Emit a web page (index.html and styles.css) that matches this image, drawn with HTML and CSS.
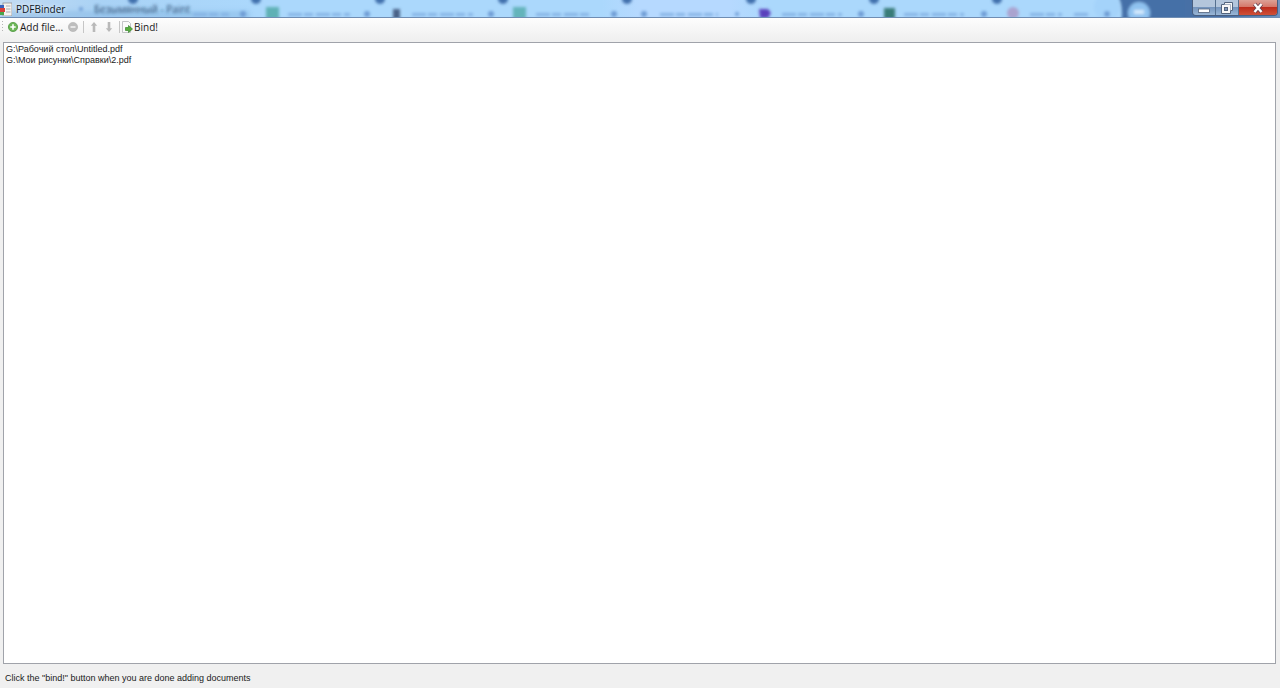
FILE: index.html
```html
<!DOCTYPE html>
<html lang="en">
<head>
  <meta charset="UTF-8" />
  <meta name="viewport" content="width=device-width, initial-scale=1.0"/>
  <title>PDFBinder</title>
  <link rel="stylesheet" href="styles.css">
</head>
<body>

  <header class="titlebar">
    <!-- Blurred windows behind the glass -->
    <svg class="glass" viewBox="0 0 1280 17" preserveAspectRatio="none" aria-hidden="true">
      <defs>
        <filter id="soft" filterUnits="userSpaceOnUse" x="-20" y="-20" width="1320" height="60"><feGaussianBlur stdDeviation="1.7"/></filter>
        <filter id="wide" filterUnits="userSpaceOnUse" x="-20" y="-20" width="1320" height="60"><feGaussianBlur stdDeviation="2.5"/></filter>
        <linearGradient id="sky">
          <stop offset="0" stop-color="#c3dbf2"/>
          <stop offset="0.08" stop-color="#a9d2f5"/>
          <stop offset="0.2" stop-color="#abd8fc"/>
          <stop offset="0.47" stop-color="#abd8fc"/>
          <stop offset="0.5" stop-color="#b6d9ff"/>
          <stop offset="0.57" stop-color="#b6d9ff"/>
          <stop offset="0.6" stop-color="#abd8fc"/>
          <stop offset="1" stop-color="#abd8fc"/>
        </linearGradient>
        <linearGradient id="desk">
          <stop offset="0" stop-color="#4470a8"/>
          <stop offset="0.6" stop-color="#466ea5"/>
          <stop offset="1" stop-color="#7fa3cd"/>
        </linearGradient>
      </defs>
      <rect width="1280" height="17" fill="url(#sky)"/>
      <rect x="0" y="11" width="250" height="8" fill="#83b5e2" opacity="0.5" filter="url(#wide)"/>
      <g filter="url(#soft)">
        <path d="M1117 -6H1300V24H1121Q1124 6 1117 -6Z" fill="url(#desk)"/>
        <circle cx="1107" cy="7" r="13" fill="#a4d3fa"/>
        <circle cx="1139" cy="13" r="11" fill="#8fc2f0"/>
        <rect x="1134" y="10" width="10" height="4" fill="#d5ebfd"/>
        <g fill="#3f6fac">
          <circle cx="133" cy="-1" r="5"/><circle cx="256" cy="-1" r="5"/>
          <circle cx="380" cy="-1" r="5"/><circle cx="503" cy="-1" r="5"/>
          <circle cx="627" cy="-1" r="5"/><circle cx="751" cy="-1" r="5"/>
          <circle cx="874" cy="-1" r="5"/><circle cx="997" cy="-1" r="5"/>
        </g>
        <rect x="266" y="7" width="13" height="12" fill="#5eb1b5"/>
        <rect x="513" y="7" width="13" height="12" fill="#64b4bb"/>
        <rect x="393" y="9" width="7" height="10" fill="#4a6287"/>
        <path d="M759 9H768L771 13L768 18H760Z" fill="#5a3fbc"/>
        <rect x="884" y="8" width="11" height="11" fill="#377b78"/>
        <circle cx="1013" cy="13" r="6" fill="#aaa3cf"/>
        <g fill="#6d9bd4">
          <circle cx="243" cy="14" r="3"/><circle cx="367" cy="14" r="3"/>
          <circle cx="491" cy="14" r="3"/><circle cx="614" cy="14" r="3"/>
          <circle cx="644" cy="14" r="3"/><circle cx="737" cy="14" r="2"/>
          <circle cx="861" cy="14" r="3"/><circle cx="984" cy="14" r="3"/>
          <circle cx="1107" cy="14" r="3"/><circle cx="81" cy="9" r="2"/>
        </g>
        <g stroke="#84b2e4" stroke-width="3" stroke-dasharray="14 2 9 3">
          <path d="M193 14.5H229M288 14.5H350M412 14.5H473M536 14.5H590M660 14.5H718M782 14.5H842M904 14.5H964M1030 14.5H1062M1074 14.5H1088"/>
        </g>
      </g>
      <g class="ghost" filter="url(#soft)">
        <text x="94" y="13">Безымянный - Paint</text>
      </g>
    </svg>

    <div class="caption">
      <svg class="app-icon" viewBox="0 0 12 14" aria-hidden="true">
        <rect x="3" y="1" width="9" height="13" fill="#f5f3f0" stroke="#8f9094" stroke-width="0.8"/>
        <path d="M6 4H10.500M6 7H10.500M6 10H10.500" stroke="#a9abb3"/>
        <path d="M0 3H4V6H0Z" fill="#375fbb"/>
        <path d="M0 6H5V10H0Z" fill="#d8403a"/>
        <path d="M0 10H4V13H0Z" fill="#4aa54b"/>
      </svg>
      <h1 class="title">PDFBinder</h1>
    </div>

    <div class="window-buttons">
      <button type="button" class="win-btn" aria-label="Minimize">
        <svg viewBox="0 0 12 12"><rect x="0.500" y="7" width="11" height="3.500" fill="#fff" stroke="#53647e" stroke-width="0.8"/></svg>
      </button>
      <button type="button" class="win-btn" aria-label="Restore">
        <svg viewBox="0 0 12 12">
          <path d="M3.500 0.500H11.500V8.500H9.500V11.500H0.500V2.500H3.500Z" fill="#f8f8f8" stroke="#53647e"/>
          <path d="M3.500 2.500H9.500V8.500" fill="none" stroke="#8797ac" stroke-width="0.7"/>
          <rect x="3.500" y="5.500" width="3" height="3" fill="#8098b8" stroke="#53647e"/>
        </svg>
      </button>
      <button type="button" class="win-btn close-btn" aria-label="Close">
        <svg viewBox="0 0 12 12">
          <path d="M2.500 2L9.500 10M9.500 2L2.500 10" stroke="#674552" stroke-width="4"/>
          <path d="M2.500 2L9.500 10M9.500 2L2.500 10" stroke="#fff" stroke-width="2.400"/>
        </svg>
      </button>
    </div>
  </header>

  <div class="toolbar" role="toolbar" aria-label="Documents">
    <span class="grip"></span>
    <button type="button" class="tool-btn">
      <svg viewBox="0 0 12 12" aria-hidden="true">
        <circle cx="6" cy="6" r="4.600" fill="#6bb557" stroke="#509943" stroke-width="0.8"/>
        <path d="M6 3.300V8.700M3.300 6H8.700" stroke="#fff" stroke-width="1.600"/>
      </svg>
      Add file...
    </button>
    <button type="button" class="tool-btn" aria-label="Remove" disabled>
      <svg viewBox="0 0 12 12" aria-hidden="true">
        <circle cx="6" cy="6" r="4.600" fill="#bdbdbd" stroke="#b0b0b0" stroke-width="0.6"/>
        <path d="M3.500 6H8.500" stroke="#f4f4f4" stroke-width="1.500"/>
      </svg>
    </button>
    <span class="separator"></span>
    <button type="button" class="tool-btn" aria-label="Move up" disabled>
      <svg viewBox="0 0 12 12" aria-hidden="true">
        <path d="M6 1L9.200 4.800H7.300V11H4.700V4.800H2.800Z" fill="#b9b9b9"/>
      </svg>
    </button>
    <button type="button" class="tool-btn" aria-label="Move down" disabled>
      <svg viewBox="0 0 12 12" aria-hidden="true">
        <path d="M6 11L9.200 7.200H7.300V1H4.700V7.200H2.800Z" fill="#b9b9b9"/>
      </svg>
    </button>
    <span class="separator"></span>
    <button type="button" class="tool-btn bind-btn">
      <svg viewBox="0 0 12 12" aria-hidden="true">
        <path d="M1.500 0.500H7.500L9.500 2.500V11.500H1.500Z" fill="#fbfbfb" stroke="#b5b8ba" stroke-width="0.8"/>
        <path d="M4.500 6.500H7.500V4.500L11.500 8L7.500 11.500V9.500H4.500Z" fill="#58ad3c" stroke="#37852c" stroke-width="0.7"/>
      </svg>
      Bind!
    </button>
  </div>

  <main class="content">
    <select class="file-list" multiple aria-label="Files to bind">
      <option>G:\Рабочий стол\Untitled.pdf</option>
      <option>G:\Мои рисунки\Справки\2.pdf</option>
    </select>
  </main>

  <footer class="status">Click the "bind!" button when you are done adding documents</footer>

</body>
</html>
```

FILE: styles.css
```css
/* General */
* {
  box-sizing: border-box;
}

body {
  margin: 0;
  height: 100vh;
  display: flex;
  flex-direction: column;
  background: #f0f0f0;
  color: #1a1a1a;
  font-family: "Liberation Sans", Arial, sans-serif;
  font-size: 9px;
  overflow: hidden;
}

button {
  margin: 0;
  padding: 0;
  border: none;
  background: none;
  color: inherit;
  font: inherit;
}

/* Title bar */
.titlebar {
  position: relative;
  display: flex;
  justify-content: space-between;
  height: 18px;
  border-bottom: 1px solid #6f8db3;
}

.glass {
  position: absolute;
  top: 0;
  left: 0;
  width: 100%;
  height: 17px;
}

.ghost {
  font-family: "Open Sans", sans-serif;
  font-size: 10px;
  fill: #29496e;
}

.caption {
  position: relative;
  display: flex;
  align-items: center;
  gap: 4px;
}

.app-icon {
  width: 12px;
  height: 14px;
}

.title {
  margin: 0;
  font-family: "Open Sans", sans-serif;
  font-size: 10px;
  font-weight: normal;
  line-height: 18px;
  color: #0d1622;
  text-shadow: 0 0 4px #fff;
}

/* Window buttons */
.window-buttons {
  position: relative;
  display: flex;
  height: 16px;
  margin-right: 2px;
  border: 1px solid #495f80;
  border-top: none;
  border-radius: 0 0 4px 4px;
  overflow: hidden;
}

.win-btn {
  display: flex;
  align-items: center;
  justify-content: center;
  width: 23px;
  background: linear-gradient(#b3c6dc 0 45%, #7595bd 50%, #9ab7d6);
  border-right: 1px solid #55708f;
}

.win-btn svg {
  width: 12px;
  height: 12px;
}

.close-btn {
  width: 38px;
  border-right: none;
  background: linear-gradient(#dca196 0, #d5786a 45%, #bd2d1d 50%, #cf5138);
}

/* Toolbar */
.toolbar {
  display: flex;
  align-items: center;
  gap: 4px;
  height: 21px;
  padding: 0 2px 3px;
  background: linear-gradient(#fdfdfd, #f0f0f0);
}

.grip {
  width: 1px;
  height: 12px;
  background: repeating-linear-gradient(#b5b5b5 0 1px, transparent 1px 3px);
}

.tool-btn {
  display: flex;
  align-items: center;
  gap: 1px;
  font-family: "Open Sans", sans-serif;
  font-size: 10px;
  line-height: 16px;
}

.tool-btn svg {
  width: 12px;
  height: 12px;
}

.tool-btn:disabled + .tool-btn:disabled {
  margin-left: -1px;
}

.bind-btn {
  margin-left: -3px;
}

.separator {
  width: 1px;
  height: 12px;
  background: #c6c6c6;
}

/* File list */
.content {
  flex: 1;
  display: flex;
  padding: 3px 4px 0 3px;
}

.file-list {
  flex: 1;
  margin: 0;
  padding: 1px 0;
  border: 1px solid #a0a3aa;
  border-radius: 0;
  background: #fff;
  color: #1a1a1a;
  font: inherit;
  outline: none;
}

.file-list option {
  min-height: 11px;
  padding: 0 2px;
  line-height: 11px;
}

/* Status */
.status {
  padding: 8px 5px 4px;
  line-height: 12px;
}
```
